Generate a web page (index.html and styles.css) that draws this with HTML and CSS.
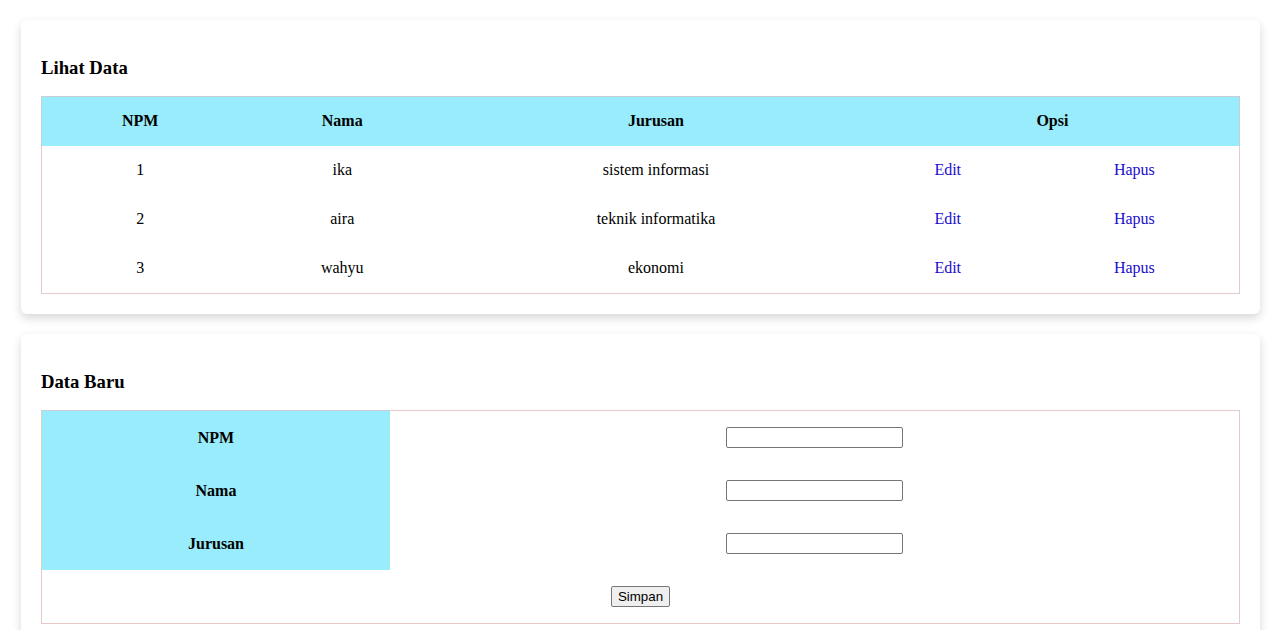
FILE: index.html
```html
<!DOCTYPE html>
<html lang="en">
<head>
    <meta charset="UTF-8">
    <meta name="viewport" content="width=device-width, initial-scale=1.0">
    <title>Data Mahasiswa</title>
    <link rel="stylesheet" href="styles.css">
</head>
<body>
    <div class="wrap">
        <div class="card">
            <h3>Lihat Data</h3>
            <table class="data-table">
                <colgroup>
                    <col class="c-npm">
                    <col class="c-nama">
                    <col class="c-jurusan">
                    <col class="c-edit">
                    <col class="c-hapus">
                </colgroup>
                <thead>
                    <tr>
                        <th>NPM</th>
                        <th>Nama</th>
                        <th>Jurusan</th>
                        <th colspan="2">Opsi</th>
                    </tr>
                </thead>
                <tbody>
                    <tr>
                        <td>1</td>
                        <td>ika</td>
                        <td>sistem informasi</td>
                        <td><a href="#">Edit</a></td>
                        <td><a href="#">Hapus</a></td>
                    </tr>
                    <tr>
                        <td>2</td>
                        <td>aira</td>
                        <td>teknik informatika</td>
                        <td><a href="#">Edit</a></td>
                        <td><a href="#">Hapus</a></td>
                    </tr>
                    <tr>
                        <td>3</td>
                        <td>wahyu</td>
                        <td>ekonomi</td>
                        <td><a href="#">Edit</a></td>
                        <td><a href="#">Hapus</a></td>
                    </tr>
                </tbody>
            </table>
        </div>

        <div class="card">
            <h3>Data Baru</h3>
            <form>
                <table class="form-table">
                    <tr>
                        <th>NPM</th>
                        <td><input type="text" name="npm"></td>
                    </tr>
                    <tr>
                        <th>Nama</th>
                        <td><input type="text" name="nama"></td>
                    </tr>
                    <tr>
                        <th>Jurusan</th>
                        <td><input type="text" name="jurusan"></td>
                    </tr>
                    <tr>
                        <td colspan="2" class="actions"><button type="submit">Simpan</button></td>
                    </tr>
                </table>
            </form>
        </div>
    </div>
</body>
</html>
```

FILE: styles.css
```css
body {
    margin: 0;
    font-family: "Liberation Serif", "Times New Roman", serif;
    font-size: 16px;
    color: #000;
    background-color: #fff;
}

.wrap {
    padding: 20px 24px 20px 21px;
}

.card {
    background-color: #fff;
    border-radius: 6px;
    box-shadow: 0 4px 10px rgba(0, 0, 0, 0.16);
    padding: 19px 20px 20px 20px;
    margin-bottom: 20px;
}

.card h3 {
    font-size: 18.72px;
    margin: 18px 0 17px 0;
    line-height: 22px;
}

table {
    width: 100%;
    border-collapse: collapse;
    border: 1px solid #e6caca;
}

th {
    background-color: #99ecfb;
    font-weight: bold;
}

.data-table th,
.data-table td {
    padding: 15px 0 16px 0;
    line-height: 18px;
    text-align: center;
}

.data-table thead th {
    padding: 15px 0 16px 0;
    border-top: 1px solid #c9ced6;
}

.data-table thead th:first-child {
    border-left: 1px solid #c9ced6;
}

.data-table thead th:last-child {
    border-right: 1px solid #c9ced6;
}

.c-npm { width: 197px; }
.c-nama { width: 208px; }
.c-jurusan { width: 420px; }
.c-edit { width: 164px; }
.c-hapus { width: 210px; }

a {
    color: #1a0dcc;
    text-decoration: none;
}

.form-table th {
    width: 348px;
    padding: 0;
    height: 53px;
    text-align: center;
}

.form-table td {
    padding: 0;
    height: 53px;
    text-align: center;
}

.form-table tr:first-child th {
    border-top: 1px solid #c9ced6;
}

input[type="text"] {
    width: 177px;
    height: 21px;
    box-sizing: border-box;
    border: 1px solid #767676;
    border-radius: 2px;
    padding: 1px 2px;
    vertical-align: middle;
}

.actions button {
    font-family: "Liberation Sans", Arial, sans-serif;
    font-size: 13.33px;
    padding: 1px 6px;
    height: 21px;
    border: 1px solid #767676;
    border-radius: 2px;
    background-color: #efefef;
    color: #000;
    vertical-align: middle;
}
```
